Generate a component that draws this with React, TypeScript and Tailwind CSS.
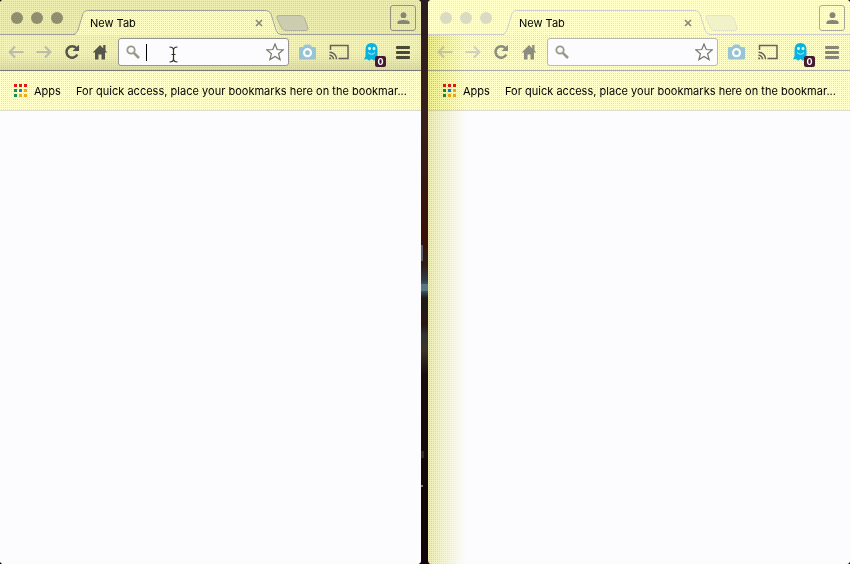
import React from "react";

type WindowProps = { active: boolean };

// Fine 2px texture: a --y and an --l pixel set diagonally on the base colour --b.
const weave =
  "[background-size:2px_2px] [background-image:conic-gradient(var(--b)_25%,var(--l)_0_50%,var(--b)_0_75%,var(--y)_0)] ";
// Areas that start on an odd row or column shift the texture by one pixel so it runs on unbroken.
const oddRow = "[background-position:0_1px] ";
const oddColumn = "[background-position:1px_0] ";

const TabShape = ({ active }: WindowProps) => (
  <div className="relative h-[35px] w-[207px] shrink-0">
    <div
      className={
        weave +
        "absolute inset-0 [clip-path:polygon(1px_35px,4px_31px,9px_13px,12px_10px,194px_10px,197px_13px,204px_31px,207px_35px)] " +
        (active
          ? "[--b:#fafaf2] [--l:#d8d8e8] [--y:#f8f8bc]"
          : oddColumn + "[--b:#fcfcfe] [--l:#e0e0f2] [--y:#ffffc6]")
      }
    />
    <svg className="absolute inset-0" width="207" height="35" fill="none">
      <path
        d="M-1 34.5C2 34 3 32 4 30L9 13.5Q10.500 10.500 13.500 10.500H192Q195.500 10.500 197 14L202 30Q203.500 34.500 207 34.500"
        stroke={active ? "#a2a29c" : "#ceced2"}
      />
    </svg>
    <div className="relative box-content flex h-[25px] items-center pl-4 pr-[18px] pt-[10px]">
      <span className="grow text-[11px] leading-[14px] text-black">New Tab</span>
      <svg width="8" height="8" viewBox="0 0 8 8">
        <path d="M1 1l6 6M7 1L1 7" stroke="#85857c" strokeWidth="1.6" />
      </svg>
    </div>
  </div>
);

const Arrow = ({ right = false, active }: { right?: boolean; active: boolean }) => (
  <svg width="16" height="14" viewBox="0 0 16 14" className={right ? "-scale-x-100" : ""}>
    <path d="M7 1.500L1.700 7L7 12.500M2 7H15.500" fill="none" stroke={active ? "#bcbcaa" : "#d0d0c0"} strokeWidth="2.200" />
  </svg>
);

const Reload = ({ color }: { color: string }) => (
  <svg width="16" height="16" viewBox="0 0 16 16">
    <path d="M12.500 4.200A5.700 5.700 0 1 0 13.300 10.500" fill="none" stroke={color} strokeWidth="2.500" />
    <path d="M15 .7V7H8.500Z" fill={color} />
  </svg>
);

const Home = ({ color }: { color: string }) => (
  <svg width="16" height="16" viewBox="0 0 16 16">
    <path d="M8 1L.7 8.500H3V15.500H6.500V10.500H9.500V15.500H13V8.500H15.300L13.500 6.600V1H11.200V4.200Z" fill={color} />
  </svg>
);

const Search = () => (
  <svg width="14" height="14" viewBox="0 0 14 14" fill="none" stroke="#99998a">
    <circle cx="5" cy="5" r="3.700" strokeWidth="1.800" />
    <path d="M7.800 7.800L13 13" strokeWidth="2.600" />
  </svg>
);

const Star = () => (
  <svg width="18" height="18" viewBox="0 0 18 18" fill="#fcfcfe" stroke="#77776a" strokeWidth="1.200">
    <path d="M9 1L11.200 6.500L17.200 6.900L12.600 10.700L14.100 16.600L9 13.400L3.900 16.600L5.400 10.700L.8 6.900L6.800 6.500Z" />
  </svg>
);

const Camera = () => (
  <svg width="17" height="16" viewBox="0 0 17 16">
    <path d="M0 4Q0 3 1 3H4L6 .5H11L13 3H16Q17 3 17 4V14Q17 15.500 15.500 15.500H1.500Q0 15.500 0 14Z" fill="#98c5d6" />
    <circle cx="8.500" cy="8.700" r="3.500" fill="#8fc0d5" stroke="#fcfcfe" strokeWidth="2.200" />
  </svg>
);

const Cast = () => (
  <svg width="20" height="16" viewBox="0 0 20 16" fill="none" stroke="#626258" strokeWidth="1.500">
    <path d="M1.500 6V1.500H19V14.500H9.500" />
    <path d="M.5 8.300A6.800 6.800 0 0 1 7.500 15.300M.5 11.200A4 4 0 0 1 4.500 15.300" />
    <path d="M.3 13.300V15.300H2.500Q2.300 13.500.3 13.300Z" fill="#626258" stroke="none" />
  </svg>
);

const Ghost = () => (
  <div className="relative h-[24px] w-[22px]">
    <svg width="15" height="18" viewBox="0 0 15 18">
      <path d="M1.500 7Q1.500 0 7.500 0T13.500 7V13L15 16.500L12 16L10 17.800L7.500 16L5 17.800L3 16L0 16.500L1.500 13Z" fill="#08b4df" />
      <ellipse cx="5.500" cy="5.500" rx="1.400" ry="1.800" fill="#d8fbff" />
      <ellipse cx="10" cy="5.500" rx="1.400" ry="1.800" fill="#d8fbff" />
      <path d="M4 9.500Q7.700 13 11 9.500" fill="none" stroke="#b8f3ff" />
    </svg>
    <span className="absolute left-[11px] top-[13px] flex h-[11px] w-[11px] items-center justify-center rounded-[2px] bg-[#451b32] text-[9px] leading-none font-bold text-white">
      0
    </span>
  </div>
);

const appColors = [
  "bg-[#df1818]", "bg-[#df1818]", "bg-[#df1818]",
  "bg-[#168c56]", "bg-[#0a80e8]", "bg-[#f4a912]",
  "bg-[#168c56]", "bg-[#f4a912]", "bg-[#f4a912]",
];

function BrowserWindow({ active }: WindowProps) {
  const dark = active ? "#55554d" : "#8c8c80";
  const dot = "h-3 w-3 rounded-full " + (active ? "bg-[#8f8f70]" : "bg-[#dbdbc4]");
  const bar = "h-[3px] w-[14px] rounded-[1px] " + (active ? "bg-[#494938]" : "bg-[#85857a]");
  return (
    <section
      className={
        "relative flex h-[564px] flex-col overflow-hidden rounded-[4px] bg-[#fcfcfe] " +
        (active ? "w-[421px]" : "w-[422px] pl-px")
      }
    >
      <header
        className={
          weave +
          "flex h-[35px] shrink-0 border-b " +
          (active
            ? "border-[#a2a29c] [--b:#e8e8da] [--l:#ccccd4] [--y:#ececae]"
            : "-ml-px border-[#ceced2] pl-px [--b:#fcfcfe] [--l:#e2e2f2] [--y:#ffffc6]")
        }
      >
        <div className="flex w-[74px] shrink-0 gap-2 pl-[11px] pt-3">
          <i className={dot} /><i className={dot} /><i className={dot} />
        </div>
        <TabShape active={active} />
        <svg width="34" height="20" viewBox="0 0 34 20" className="-ml-[6px] mt-[13px] shrink-0">
          <path
            d="M4 2.500H25Q28 2.500 29.500 5L33 15Q33.500 17.500 31 17.500H11Q8 17.500 6.500 15L2 5Q1 2.500 4 2.500Z"
            fill={active ? "#ccccb0" : "#f2f2c8"}
            stroke={active ? "#b0b09d" : "#e2e2cc"}
          />
        </svg>
        <div className={"ml-auto mr-[5px] mt-[5px] flex h-[26px] w-[26px] items-center justify-center rounded-[3px] border " + (active ? "border-[#929280]" : "border-[#a8a89c]")}>
          <svg width="13" height="13" viewBox="0 0 13 13" fill="#85857a">
            <circle cx="6.500" cy="3.200" r="2.900" />
            <path d="M.5 12V10.200Q.5 8 6.500 8T12.500 10.200V12Z" />
          </svg>
        </div>
      </header>

      <nav
        className={
          weave +
          oddRow +
          "flex h-9 shrink-0 items-center border-b pb-px " +
          (active
            ? "border-[#7c7c76] shadow-[inset_0_-14px_14px_-8px_#0000001c] [--b:#eeeee4] [--l:#d4d4de] [--y:#f2f2b6]"
            : "-ml-px border-[#adadb0] pl-px [--b:#fafaf8] [--l:#dadaea] [--y:#fafac0]")
        }
      >
        <div className="flex w-[118px] shrink-0 items-center pl-[8px]">
          <Arrow active={active} />
          <span className="ml-3 flex"><Arrow right active={active} /></span>
          <span className="ml-3 flex"><Reload color={dark} /></span>
          <span className="ml-3 flex"><Home color={dark} /></span>
        </div>
        <div className={"flex h-7 w-[171px] shrink-0 items-center rounded-[3px] border bg-[#fcfcfe] pl-[7px] pr-[4px] " + (active ? "border-[#96968a]" : "border-[#b9b9ae]")}>
          <Search />
          {active && <span className="ml-[6px] h-[17px] w-px bg-black" />}
          {active && (
            <svg width="9" height="17" viewBox="0 0 9 17" className="ml-[22px] mt-[5px]" fill="none">
              <path d="M.5 1Q4.500 1 4.500 4V13Q4.500 16 .5 16M8.500 1Q4.500 1 4.500 4M4.500 13Q4.500 16 8.500 16M2.500 8.500H6.500" stroke="#303020" strokeWidth="1.200" />
            </svg>
          )}
          <span className="ml-auto"><Star /></span>
        </div>
        <span className="ml-[10px]"><Camera /></span>
        <span className="ml-[13px]"><Cast /></span>
        <span className="ml-[15px] mt-[6px]"><Ghost /></span>
        <div className="ml-[10px] flex flex-col gap-[2px]">
          <i className={bar} /><i className={bar} /><i className={bar} />
        </div>
      </nav>

      <div
        className={
          weave +
          oddRow +
          "flex h-10 shrink-0 items-center border-b border-[#dedece] pt-px text-[11px] text-black [--b:#fcfcfe] [--l:#dedeee] [--y:#fcfcc4] " +
          (active ? "pl-[14px]" : "-ml-px pl-[15px]")
        }
      >
        <div className="mb-px grid grid-cols-3 gap-[2px]">
          {appColors.map((c, i) => <i key={i} className={"h-[3px] w-[3px] " + c} />)}
        </div>
        <span className="ml-[7px] w-[42px] shrink-0 whitespace-nowrap">Apps</span>
        <span className="whitespace-nowrap tracking-[0.018px]">For quick access, place your bookmarks here on the bookmar...</span>
      </div>
      <main className="grow bg-[#fcfcfe]" />
      {!active && (
        <div className={weave + oddRow + "pointer-events-none absolute bottom-0 left-0 top-[35px] w-[38px] mix-blend-multiply [--b:#e8e8ec] [--l:#ccccdc] [--y:#eeeeb0] [mask-image:linear-gradient(to_right,black,#0009_35%,transparent)]"} />
      )}
    </section>
  );
}

export default function App() {
  return (
    <div className="flex h-[564px] w-[850px] overflow-hidden bg-[linear-gradient(#2c1c20_0,#38201c_110px,#381008_235px,#301c18_265px,#303c4c_280px,#506c78_288px,#1c1c18_298px,#281814_325px,#303434_335px,#3c3428_350px,#180c0c_375px,#100408_564px)] font-['Inter','Noto_Sans',sans-serif]">
      <BrowserWindow active />
      <div className="flex w-[7px] shrink-0 flex-col pt-[245px]">
        <i className="h-[16px] w-[2px] bg-[#555968]" />
        <i className="mt-[23px] h-[7px] w-[7px] bg-[#557883]" />
        <i className="mt-[160px] h-[7px] w-[3px] bg-[#33272a]" />
        <i className="mt-[27px] h-[2px] w-[2px] bg-[#778080]" />
      </div>
      <BrowserWindow active={false} />
    </div>
  );
}
